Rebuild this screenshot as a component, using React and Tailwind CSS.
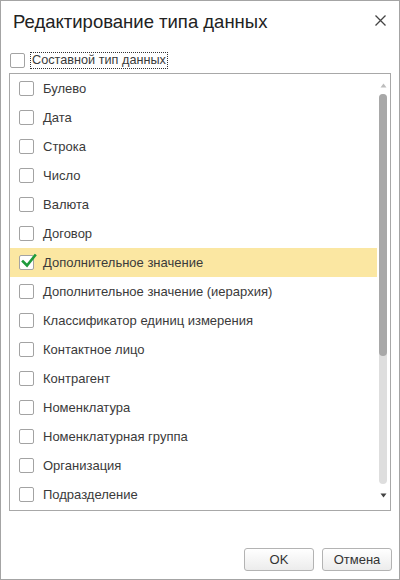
import React from "react";

const items = [
  "Булево",
  "Дата",
  "Строка",
  "Число",
  "Валюта",
  "Договор",
  "Дополнительное значение",
  "Дополнительное значение (иерархия)",
  "Классификатор единиц измерения",
  "Контактное лицо",
  "Контрагент",
  "Номенклатура",
  "Номенклатурная группа",
  "Организация",
  "Подразделение",
];

function Box({ checked }) {
  return (
    <div className="relative w-[15px] h-[15px] shrink-0 rounded-[2px] border border-[#a3a3a3] bg-white">
      {checked && (
        <svg className="absolute left-[1px] top-[-3px]" width="16" height="16" viewBox="0 0 16 16">
          <path d="M2 8.5 L6 12.5 L14 2.5" fill="none" stroke="#1e9a3c" strokeWidth="2.6" strokeLinecap="square" />
        </svg>
      )}
    </div>
  );
}

export default function App() {
  return (
    <div
      className="w-[400px] h-[580px] bg-white border border-[#a4a4a4] flex flex-col text-[#3a3a3a]"
      style={{ fontFamily: '"Liberation Sans", Arial, sans-serif' }}
    >
      <div className="flex items-start justify-between pl-[12px] pr-[13px] pt-[9px] h-[50px]">
        <div className="text-[18.5px] leading-[24px] text-[#222]">Редактирование типа данных</div>
        <svg className="mt-[5px]" width="11" height="11" viewBox="0 0 11 11">
          <path d="M0.5 0.5 L10.5 10.5 M10.5 0.5 L0.5 10.5" stroke="#444" strokeWidth="1.3" />
        </svg>
      </div>
      <div className="flex items-center pl-[9px] h-[17px] mt-[1px]">
        <Box />
        <div className="ml-[5px] px-[1px] h-[17px] flex items-center border border-dotted border-[#333] text-[12.7px] leading-none">
          Составной тип данных
        </div>
      </div>
      <div className="mx-[8px] mt-[4px] h-[438px] border border-[#a8a8a8] flex">
        <div className="flex-1 flex flex-col">
          {items.map((t, i) => (
            <div
              key={t}
              className={
                "h-[29px] shrink-0 flex items-center pl-[9px] gap-[9px] text-[13px] " +
                (i === 6 ? "bg-[#fbe7a2]" : "")
              }
            >
              <Box checked={i === 6} />
              <span>{t}</span>
            </div>
          ))}
        </div>
        <div className="w-[13px] shrink-0 flex flex-col items-center pt-[9px] pr-[1px]">
          <svg width="7" height="5" viewBox="0 0 7 5">
            <path d="M3.5 0.5 L6.5 4.5 L0.5 4.5 Z" fill="#bdbdbd" />
          </svg>
          <div className="mt-[6px] w-[8px] h-[390px] rounded-full bg-[#dedede] flex flex-col">
            <div className="h-[262px] w-full rounded-full bg-[#a8a8a8]" />
          </div>
          <svg className="mt-[9px]" width="7" height="5" viewBox="0 0 7 5">
            <path d="M0.5 0.5 L6.5 0.5 L3.5 4.5 Z" fill="#444" />
          </svg>
        </div>
      </div>
      <div className="flex justify-end gap-[8px] pr-[7px] mt-[37px]">
        <button className="w-[70px] h-[23px] rounded-[3px] border border-[#b3b3b3] bg-gradient-to-b from-white to-[#ececec] text-[13px] text-[#333] leading-none">
          OK
        </button>
        <button className="w-[70px] h-[23px] rounded-[3px] border border-[#b3b3b3] bg-gradient-to-b from-white to-[#ececec] text-[13px] text-[#333] leading-none">
          Отмена
        </button>
      </div>
    </div>
  );
}
